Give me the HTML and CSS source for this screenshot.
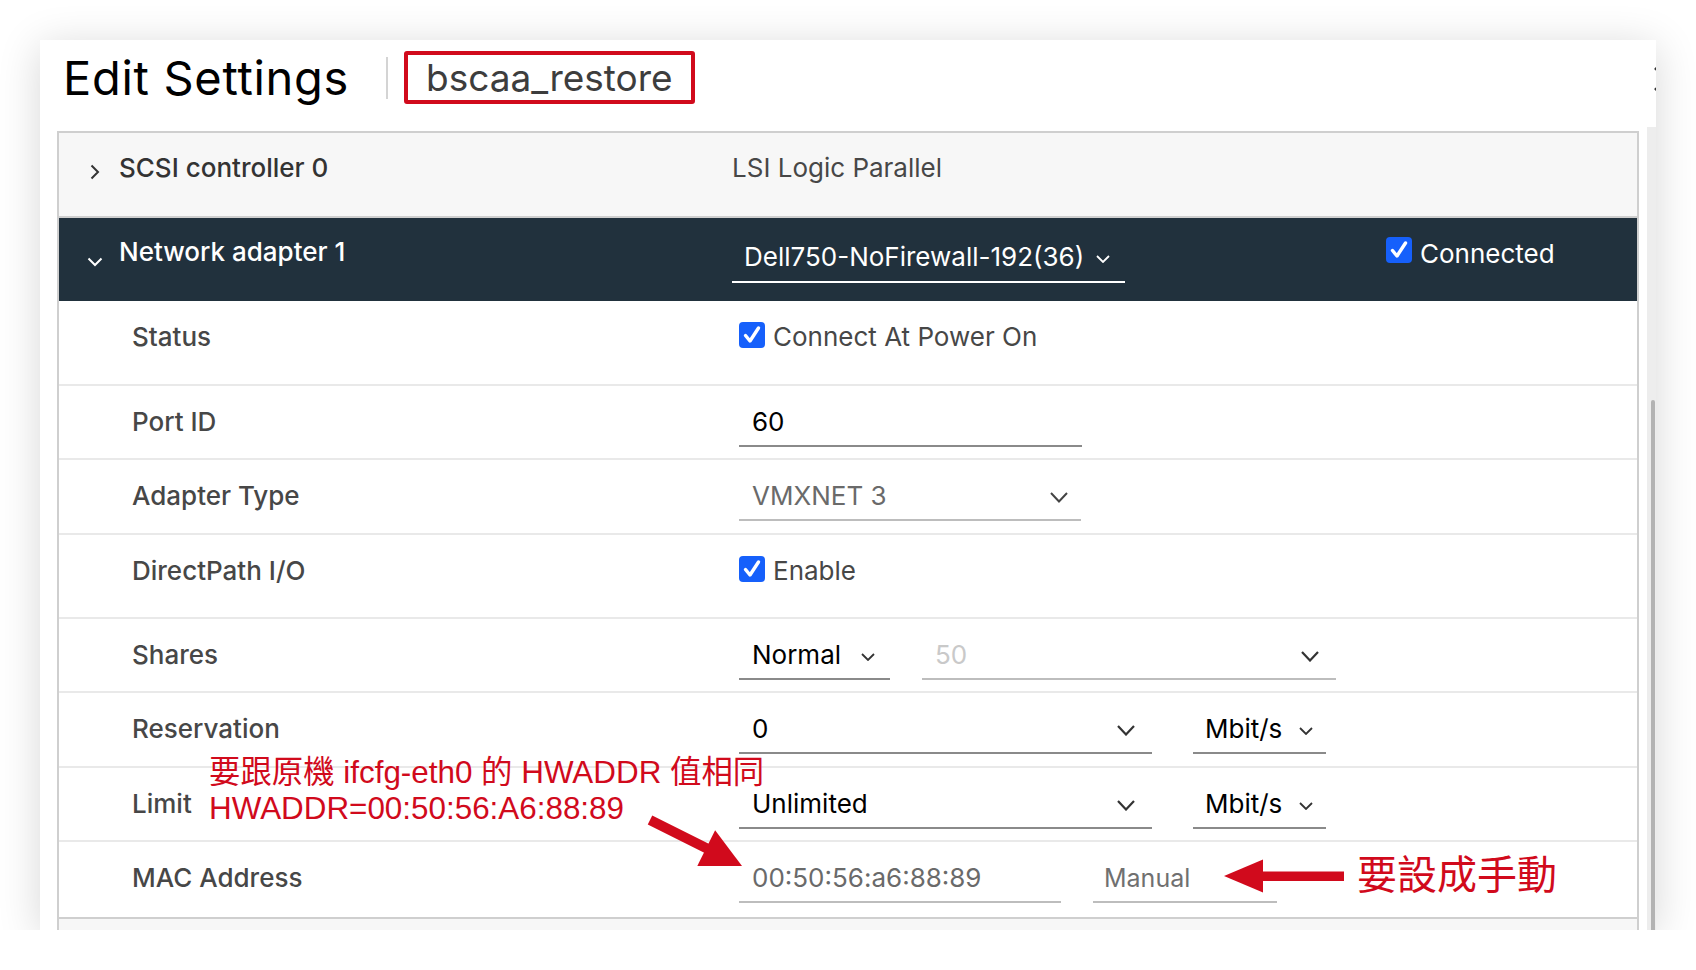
FILE: index.html
```html
<!DOCTYPE html>
<html lang="en">
<head>
<meta charset="utf-8">
<title>Edit Settings</title>
<link rel="stylesheet" href="styles.css">
</head>
<body>
<div class="dialog">
  <div class="dlg-header">
    <h1 class="title">Edit Settings</h1>
    <span class="sep"></span>
    <span class="vmname">bscaa_restore</span>
    <svg class="close" viewBox="0 0 28 28" width="28" height="28"><path d="M3 3 L25 25 M25 3 L3 25" stroke="#333" stroke-width="2.6" fill="none"/></svg>
  </div>
  <div class="dlg-body">
    <div class="stack">
      <div class="row head light r85">
        <div class="label"><svg class="chev-r" viewBox="0 0 10 16" width="10" height="16"><path d="M1.5 1.5 L8 8 L1.5 14.5" fill="none" stroke="#333" stroke-width="2"/></svg>SCSI controller 0</div>
        <div class="value plain">LSI Logic Parallel</div>
      </div>
      <div class="row head dark r83">
        <div class="label"><svg class="chev-d" viewBox="0 0 16 10" width="16" height="10"><path d="M1.5 1.5 L8 8 L14.5 1.5" fill="none" stroke="#fff" stroke-width="2"/></svg>Network adapter 1</div>
        <div class="value">
          <div class="field net">
            <span>Dell750-NoFirewall-192(36)</span>
            <svg class="chev-s" viewBox="0 0 14 8" width="14" height="8"><path d="M1 1 L7 7 L13 1" fill="none" stroke="#fff" stroke-width="1.8"/></svg>
          </div>
          <label class="check connected"><span class="box"><svg viewBox="0 0 26 26" width="26" height="26"><path d="M6.5 13.5 L11 19 L19.5 6" fill="none" stroke="#fff" stroke-width="3.4" stroke-linecap="round" stroke-linejoin="round"/></svg></span>Connected</label>
        </div>
      </div>
      <div class="row sub r85">
        <div class="label">Status</div>
        <div class="value">
          <label class="check"><span class="box"><svg viewBox="0 0 26 26" width="26" height="26"><path d="M6.5 13.5 L11 19 L19.5 6" fill="none" stroke="#fff" stroke-width="3.4" stroke-linecap="round" stroke-linejoin="round"/></svg></span>Connect At Power On</label>
        </div>
      </div>
      <div class="row sub r74">
        <div class="label">Port ID</div>
        <div class="value">
          <div class="field w343"><span>60</span></div>
        </div>
      </div>
      <div class="row sub r75">
        <div class="label">Adapter Type</div>
        <div class="value">
          <div class="field w342 disabled"><span>VMXNET 3</span>
            <svg class="chev-l" viewBox="0 0 18 11" width="18" height="11"><path d="M1 1 L9 9.5 L17 1" fill="none" stroke="#444" stroke-width="2"/></svg>
          </div>
        </div>
      </div>
      <div class="row sub r84">
        <div class="label">DirectPath I/O</div>
        <div class="value">
          <label class="check"><span class="box"><svg viewBox="0 0 26 26" width="26" height="26"><path d="M6.5 13.5 L11 19 L19.5 6" fill="none" stroke="#fff" stroke-width="3.4" stroke-linecap="round" stroke-linejoin="round"/></svg></span>Enable</label>
        </div>
      </div>
      <div class="row sub r74">
        <div class="label">Shares</div>
        <div class="value gap33">
          <div class="field w151"><span>Normal</span>
            <svg class="chev-s" viewBox="0 0 14 8" width="14" height="8"><path d="M1 1 L7 7 L13 1" fill="none" stroke="#333" stroke-width="1.8"/></svg>
          </div>
          <div class="field w414 faint"><span>50</span>
            <svg class="chev-l" viewBox="0 0 18 11" width="18" height="11"><path d="M1 1 L9 9.5 L17 1" fill="none" stroke="#333" stroke-width="2.2"/></svg>
          </div>
        </div>
      </div>
      <div class="row sub r75">
        <div class="label">Reservation</div>
        <div class="value gap41">
          <div class="field w413"><span>0</span>
            <svg class="chev-l" viewBox="0 0 18 11" width="18" height="11"><path d="M1 1 L9 9.5 L17 1" fill="none" stroke="#333" stroke-width="2.2"/></svg>
          </div>
          <div class="field w133 unit"><span>Mbit/s</span>
            <svg class="chev-s" viewBox="0 0 14 8" width="14" height="8"><path d="M1 1 L7 7 L13 1" fill="none" stroke="#333" stroke-width="1.8"/></svg>
          </div>
        </div>
      </div>
      <div class="row sub r74">
        <div class="label">Limit</div>
        <div class="value gap41">
          <div class="field w413"><span>Unlimited</span>
            <svg class="chev-l" viewBox="0 0 18 11" width="18" height="11"><path d="M1 1 L9 9.5 L17 1" fill="none" stroke="#333" stroke-width="2.2"/></svg>
          </div>
          <div class="field w133 unit"><span>Mbit/s</span>
            <svg class="chev-s" viewBox="0 0 14 8" width="14" height="8"><path d="M1 1 L7 7 L13 1" fill="none" stroke="#333" stroke-width="1.8"/></svg>
          </div>
        </div>
      </div>
      <div class="row sub r75 last">
        <div class="label">MAC Address</div>
        <div class="value gap32">
          <div class="field w322 disabled"><span>00:50:56:a6:88:89</span></div>
          <div class="field w184 disabled manual"><span>Manual</span></div>
        </div>
      </div>
      <div class="row head light r85 topline"></div>
    </div>
    <div class="scrollbar"><div class="track"><div class="thumb"></div></div></div>
  </div>

  <div class="note note-left">要跟原機 ifcfg-eth0 的 HWADDR 值相同<br>HWADDR=00:50:56:A6:88:89</div>
  <svg class="arrow arrow-diag" viewBox="0 0 100 55" width="100" height="55">
    <line x1="5" y1="5" x2="64" y2="34.5" stroke="#d10a1c" stroke-width="10"/>
    <polygon points="97,51 52.3,51 70.1,15.2" fill="#d10a1c"/>
  </svg>
  <svg class="arrow arrow-left" viewBox="0 0 126 40" width="126" height="40">
    <rect x="42" y="15.5" width="82" height="9.5" fill="#d10a1c"/>
    <polygon points="4,20 43,3.5 43,36.5" fill="#d10a1c"/>
  </svg>
  <div class="note note-right">要設成手動</div>
</div>
</body>
</html>
```
FILE: styles.css
```css
* { box-sizing: border-box; }
html, body { margin: 0; padding: 0; background: #fff; }
body { font-family: Inter, "Noto Sans", sans-serif; color: #1b1b1b; }

.dialog {
  position: relative;
  margin: 40px 0 0 40px;
  width: 1616px;
  height: 890px;
  background: #fff;
  box-shadow: 0 6px 40px rgba(0, 0, 0, 0.16);
  overflow: hidden;
  display: flex;
  flex-direction: column;
}

/* header */
.dlg-header {
  position: relative;
  flex: none;
  height: 91px;
  padding: 0 0 16px 23px;
  display: flex;
  align-items: center;
}
.title {
  margin: 0;
  font-size: 47px;
  font-weight: 400;
  line-height: 1;
  color: #000;
  letter-spacing: 0.7px;
}
.sep {
  width: 2px;
  height: 42px;
  background: #d4d4d4;
  margin: 0 16px 0 37px;
}
.vmname {
  width: 291px;
  height: 53px;
  border: 4px solid #d10a1c;
  border-radius: 3px;
  padding-left: 18px;
  display: flex;
  align-items: center;
  font-size: 37px;
  font-weight: 400;
  color: #3d3d3d;
}
.close {
  position: absolute;
  left: 1612px;
  top: 25px;
}

/* body */
.dlg-body {
  flex: 1;
  min-height: 0;
  display: flex;
  padding-left: 17px;
}
.stack {
  flex: 1;
  border: 2px solid #cfcfcf;
  border-bottom: none;
}
.scrollbar {
  width: 17px;
  flex: none;
  padding: 0 0 0 8px;
  margin-top: -4px;
}
.track {
  height: 100%;
  background: #ededed;
  padding-top: 273px;
  padding-left: 4px;
}
.thumb {
  width: 4px;
  height: 100%;
  background: #b3b3b3;
  border-radius: 2px 2px 0 0;
}

/* rows */
.row {
  display: flex;
  border-bottom: 2px solid #e9e9e9;
  font-size: 26px;
  line-height: 32px;
}
.r74 { height: 74px; }
.r75 { height: 75px; }
.r83 { height: 83px; }
.r84 { height: 84px; }
.r85 { height: 85px; }
.row.last { border-bottom: none; }
.row.topline { border-top: 2px solid #cfcfcf; }

.label {
  flex: none;
  width: 680px;
  padding: 20px 0 0 73px;
  color: #474747;
  font-weight: 500;
}
.value {
  flex: 1;
  display: flex;
  align-items: flex-start;
  padding-top: 20px;
}
.gap33 { gap: 32px; }
.gap41 { gap: 41px; }
.gap32 { gap: 32px; }

/* header rows */
.row.head .label {
  width: 673px;
  padding: 19px 0 0 30px;
  display: flex;
  align-items: flex-start;
}
.row.light {
  background: #f7f7f7;
  border-bottom: 2px solid #cfcfcf;
}
.row.light .label { color: #333; }
.row.head .value.plain { padding-top: 19px; color: #474747; }
.chev-r { flex: none; margin: 12px 19px 0 1px; }
.chev-d { flex: none; margin: 21px 16px 0 -2px; }

.row.dark {
  background: #21313d;
  border-bottom: none;
}
.row.dark .label {
  color: #fff;
  padding-top: 18px;
}
.row.dark .value { padding-top: 0; }

/* fields */
.field {
  height: 41px;
  padding: 0 13px 7px 13px;
  border-bottom: 2px solid #8a8a8a;
  display: flex;
  align-items: center;
  justify-content: space-between;
  color: #000;
  font-weight: 400;
  white-space: nowrap;
}
.field.net {
  width: 393px;
  height: 65px;
  padding: 23px 15px 8px 12px;
  border-bottom-color: #fff;
  color: #fff;
}
.field.disabled { color: #6a6a6a; border-bottom-color: #bdbdbd; }
.field.faint { color: #c9c9c9; border-bottom-color: #bdbdbd; padding-right: 17px; }
.w343 { width: 343px; }
.w342 { width: 342px; }
.w151 { width: 151px; padding-right: 15px; }
.w414 { width: 414px; }
.w413 { width: 413px; padding-right: 17px; }
.w133 { width: 133px; padding-left: 12px; }
.w322 { width: 322px; }
.w184 { width: 184px; }
.field.manual { padding-left: 11px; font-size: 25px; color: #707070; }
.chev-s, .chev-l { flex: none; margin-top: 3px; }

/* checkboxes */
.check {
  display: flex;
  align-items: flex-start;
  color: #474747;
  font-weight: 400;
}
.box {
  width: 26px;
  height: 26px;
  flex: none;
  margin: 1px 8px 0 0;
  border-radius: 4px;
  background: #1660fb;
}
.box svg { display: block; }
.connected {
  margin: 19px 0 0 261px;
  color: #fff;
  line-height: 34px;
}
.connected .box { margin-top: 0; }

/* annotations */
.note {
  position: absolute;
  font-family: "Liberation Sans", "Noto Sans CJK TC", sans-serif;
  color: #d10a1c;
  white-space: nowrap;
}
.note-left {
  left: 169px;
  top: 715px;
  font-size: 31.4px;
  line-height: 36px;
}
.note-right {
  left: 1317px;
  top: 808px;
  font-size: 40px;
  line-height: 48px;
  font-family: "Noto Sans CJK TC", sans-serif;
}
.arrow { position: absolute; }
.arrow-diag { left: 605px; top: 775px; }
.arrow-left { left: 1180px; top: 816px; }
```
